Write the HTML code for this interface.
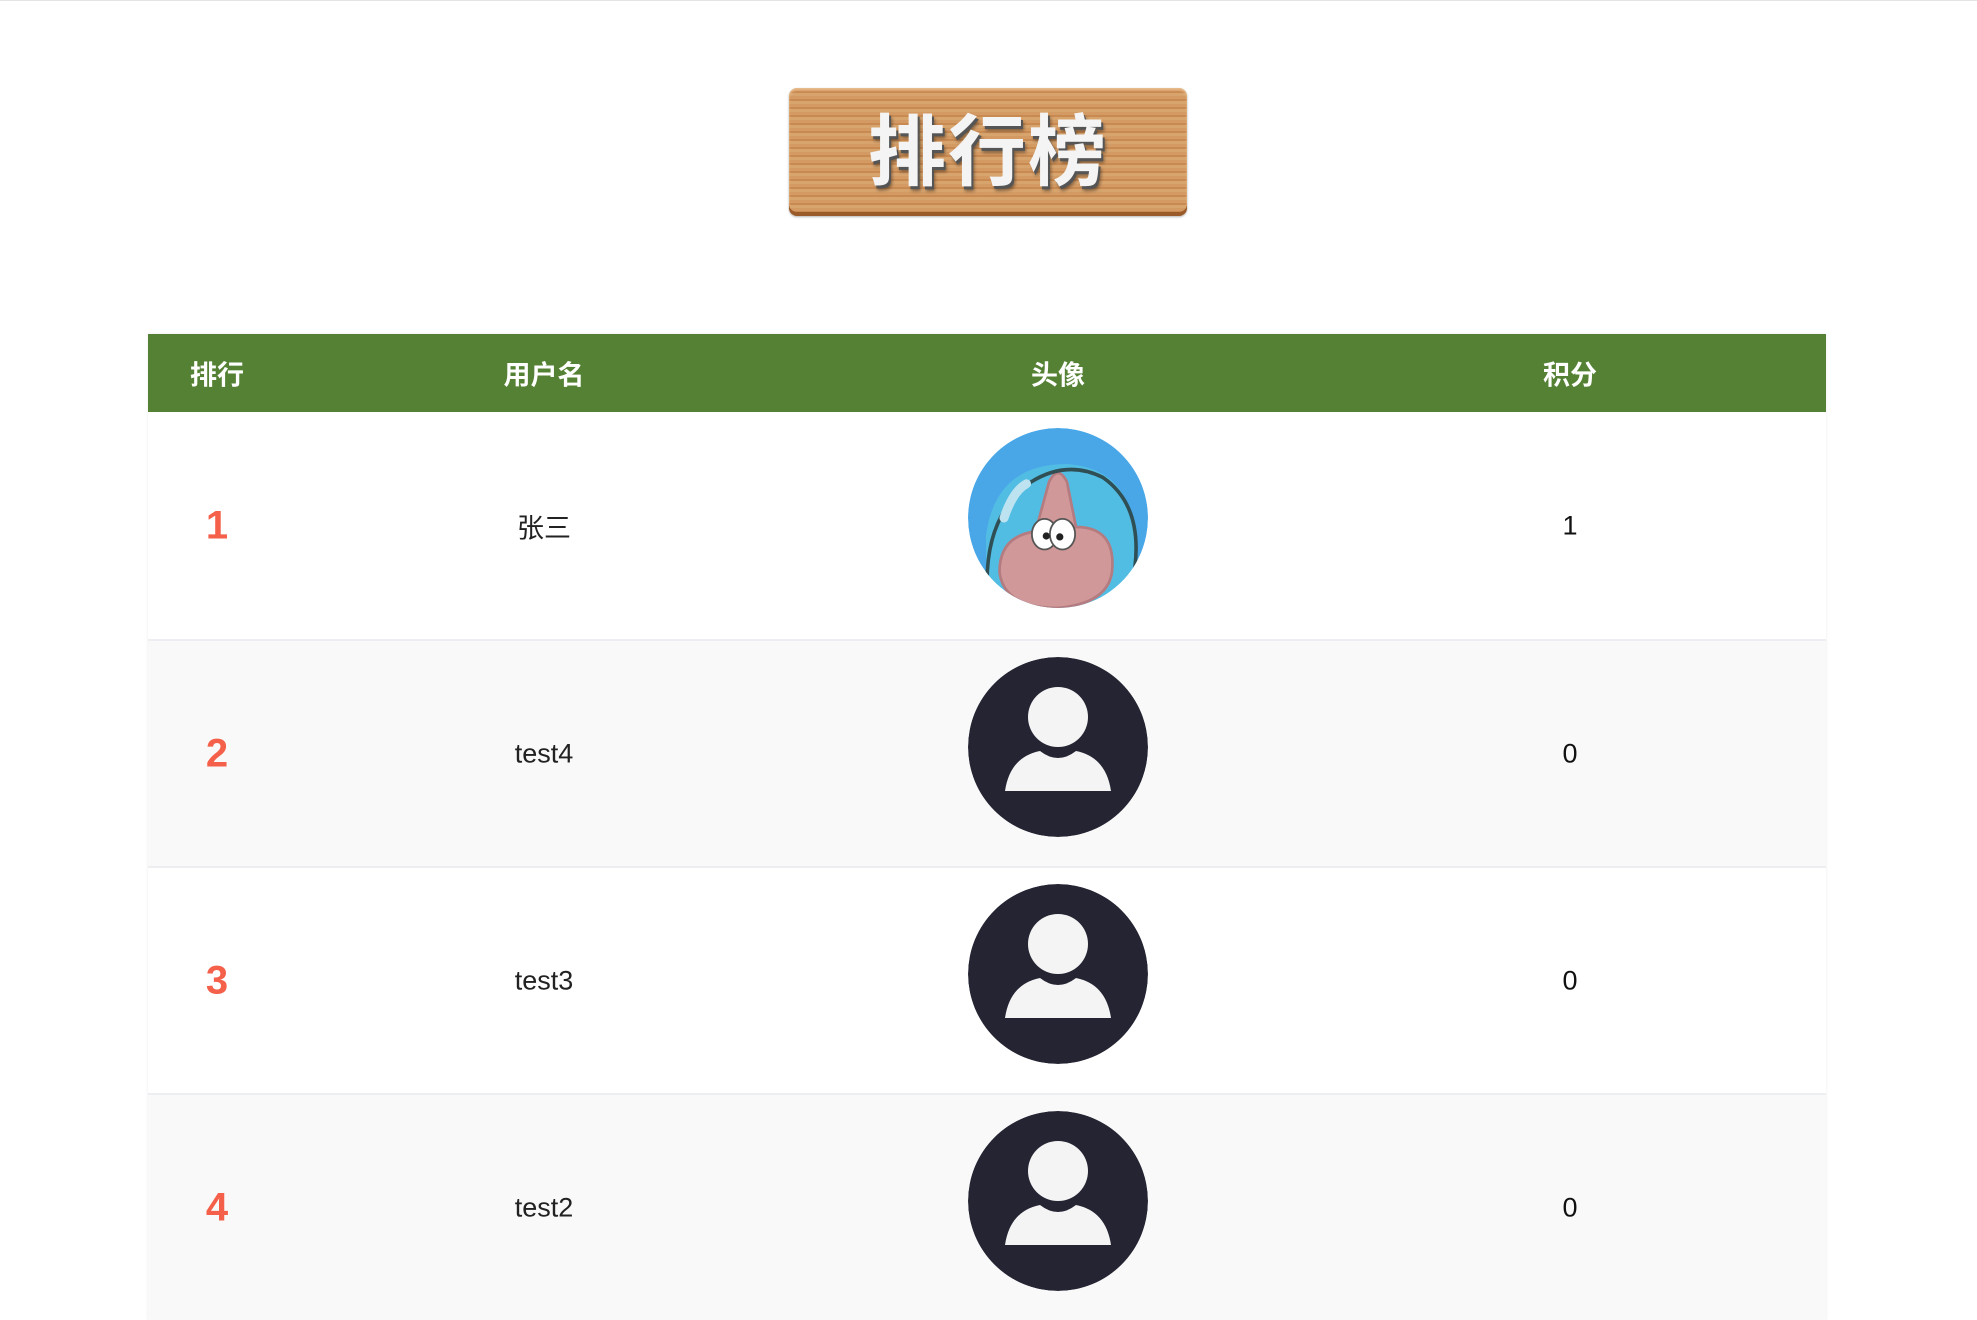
<!DOCTYPE html>
<html><head><meta charset="utf-8"><style>
*{margin:0;padding:0;box-sizing:border-box}
body{width:1977px;height:1252px;overflow:hidden;background:#fff;font-family:"Liberation Sans","Noto Sans CJK SC",sans-serif;border-top:1px solid #e4e4e4;position:relative}
.sign{position:absolute;left:789px;top:87px;width:398px;height:128px;border-radius:8px;background:repeating-linear-gradient(180deg,#d39a63 0 3px,#c98a52 3px 5px,#d8a46e 5px 8px);box-shadow:inset 0 -4px 0 #9a5a2a,inset 0 2px 2px #e9bd8e,0 1px 2px rgba(0,0,0,.3);text-align:center}
.sign span{display:block;font-size:78px;font-weight:bold;color:#f4f4f4;line-height:128px;letter-spacing:2px;text-shadow:2px 3px 0 #555,3px 5px 3px rgba(0,0,0,.4)}
.tbl{position:absolute;left:148px;top:333px;width:1678px;box-shadow:0 0 3px rgba(0,0,0,.08)}
.hd{height:78px;background:#548134;color:#fff;font-weight:bold;font-size:27px;position:relative}
.row{height:227px;position:relative;border-top:2px solid #eceef2}
.row.alt{background:#f9f9f9}
.c{position:absolute;top:50%;transform:translate(-50%,-50%);white-space:nowrap}
.rank{color:#f5604a;font-weight:bold;font-size:40px}
.name{font-size:27px;color:#222}
.score{font-size:27px;color:#111}
.av{position:absolute;left:820px;top:16px;width:180px;height:180px;border-radius:50%;overflow:hidden}
</style></head><body>
<div class="sign"><span>排行榜</span></div>
<div class="tbl">
<div class="hd"><span class="c" style="left:69px">排行</span><span class="c" style="left:396px">用户名</span><span class="c" style="left:910px">头像</span><span class="c" style="left:1422px">积分</span></div>
<div class="row" style="border-top:none"><span class="c rank" style="left:69px">1</span><span class="c name" style="left:396px">张三</span>
<div class="av"><svg width="180" height="180" viewBox="0 0 200 200"><circle cx="100" cy="100" r="100" fill="#49a7e8"/><path d="M20 200 L20 120 Q30 40 110 40 Q180 45 185 120 L185 200Z" fill="#52bde3"/><path d="M90 60 Q100 40 110 60 L120 110 Q165 110 160 160 Q155 195 100 200 Q40 200 35 160 Q35 120 75 115 Z" fill="#d09898" stroke="#b47c80" stroke-width="3"/><ellipse cx="85" cy="118" rx="14" ry="17" fill="#fff" stroke="#555" stroke-width="2"/><ellipse cx="105" cy="118" rx="14" ry="17" fill="#fff" stroke="#555" stroke-width="2"/><circle cx="87" cy="120" r="4" fill="#222"/><circle cx="102" cy="121" r="4" fill="#222"/><path d="M22 190 Q15 100 70 60 Q110 35 150 55 Q200 90 182 175" fill="none" stroke="#2f4f55" stroke-width="4"/><path d="M40 100 Q50 70 65 62" stroke="#bde3f0" stroke-width="10" stroke-linecap="round" fill="none"/></svg></div>
<span class="c score" style="left:1422px">1</span></div>
<div class="row alt"><span class="c rank" style="left:69px">2</span><span class="c name" style="left:396px">test4</span>
<div class="av"><svg width="180" height="180" viewBox="0 0 180 180"><circle cx="90" cy="90" r="90" fill="#242433"/><circle cx="90" cy="60" r="30" fill="#f4f4f4"/><path d="M37 134 Q42 100 72 94 Q90 108 108 94 Q138 100 143 134Z" fill="#f4f4f4"/></svg></div>
<span class="c score" style="left:1422px">0</span></div>
<div class="row"><span class="c rank" style="left:69px">3</span><span class="c name" style="left:396px">test3</span>
<div class="av"><svg width="180" height="180" viewBox="0 0 180 180"><circle cx="90" cy="90" r="90" fill="#242433"/><circle cx="90" cy="60" r="30" fill="#f4f4f4"/><path d="M37 134 Q42 100 72 94 Q90 108 108 94 Q138 100 143 134Z" fill="#f4f4f4"/></svg></div>
<span class="c score" style="left:1422px">0</span></div>
<div class="row alt"><span class="c rank" style="left:69px">4</span><span class="c name" style="left:396px">test2</span>
<div class="av"><svg width="180" height="180" viewBox="0 0 180 180"><circle cx="90" cy="90" r="90" fill="#242433"/><circle cx="90" cy="60" r="30" fill="#f4f4f4"/><path d="M37 134 Q42 100 72 94 Q90 108 108 94 Q138 100 143 134Z" fill="#f4f4f4"/></svg></div>
<span class="c score" style="left:1422px">0</span></div>
</div>
</body></html>
